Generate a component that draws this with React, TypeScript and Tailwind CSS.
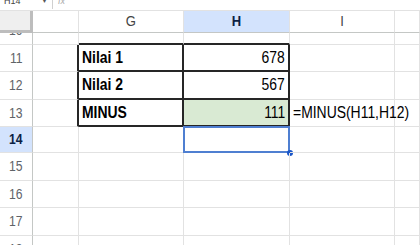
import React from "react";

const cols = [33, 46, 105, 106, 105, 25];

type CellProps = {
  w: number;
  className?: string;
  children?: React.ReactNode;
};

function Cell({ w, className = "", children }: CellProps) {
  return (
    <div
      className={`relative shrink-0 border-r border-b ${className}`}
      style={{ width: w }}
    >
      {children}
    </div>
  );
}

function RowHead({ n, active, h }: { n: number; active?: boolean; h: number }) {
  return (
    <div
      className={`flex shrink-0 items-center justify-center border-r border-b border-r-[#c4c7c5] border-b-[#e2e2e2] text-[14px] ${
        active ? "bg-[#d3e3fd] font-bold text-[#0b1f44]" : "bg-white text-[#5f6368]"
      }`}
      style={{ width: cols[0], height: h }}
    >
      <span className="inline-block scale-x-[0.87]">{n}</span>
    </div>
  );
}

const grid = "border-r-[#e2e2e2] border-b-[#e2e2e2]";

export default function App() {
  return (
    <div className="h-[245px] w-[420px] overflow-hidden bg-white font-['Liberation_Sans',Arial,sans-serif] text-[16px] text-black">
      {/* name box / formula bar strip */}
      <div className="relative flex h-[11px] items-center overflow-hidden border-b border-[#e2e2e2] text-[9px] text-[#444]">
        <span className="absolute -top-[5px] left-[4px]">H14</span>
        <span className="absolute -top-[4px] left-[41px] text-[7px] text-[#555]">▼</span>
        <span className="absolute -top-[2px] left-[52px] h-[11px] w-px bg-[#d0d0d0]" />
        <span className="absolute -top-[5px] left-[58px] italic text-[#aaa]">fx</span>
      </div>

      {/* column headers */}
      <div className="flex h-[22px]">
        <div className="shrink-0 border-r-[3px] border-b-[3px] border-[#bdbdbd] bg-[#efefef]" style={{ width: cols[0] }} />
        {["", "G", "H", "I", ""].map((c, i) => (
          <div
            key={i}
            className={`flex shrink-0 items-center justify-center border-r border-b border-r-[#e2e2e2] border-b-[#c4c7c5] text-[15px] ${
              c === "H" ? "bg-[#d3e3fd] font-bold text-[#0b1f44]" : "text-[#444]"
            }`}
            style={{ width: cols[i + 1] }}
          >
            <span className="inline-block scale-x-[0.87]">{c}</span>
          </div>
        ))}
      </div>

      {/* row 10 partially hidden */}
      <div className="flex h-[12px]">
        <div
          className="shrink-0 overflow-hidden border-r border-b border-r-[#c4c7c5] border-b-[#e2e2e2] text-[14px] text-[#5f6368]"
          style={{ width: cols[0] }}
        >
          <div className="-mt-[16px] flex h-[27px] items-center justify-center">
            <span className="inline-block scale-x-[0.87]">10</span>
          </div>
        </div>
        <Cell w={cols[1]} className={grid} />
        <Cell w={cols[2]} className="border-b-2 border-r-[#e2e2e2] border-b-[#262626]" />
        <Cell w={cols[3]} className="border-b-2 border-r-[#e2e2e2] border-b-[#262626]" />
        <Cell w={cols[4]} className={grid} />
        <Cell w={cols[5]} className={grid} />
      </div>

      {[
        { n: 11, h: 27, label: "Nilai 1", val: "678" },
        { n: 12, h: 28, label: "Nilai 2", val: "567" },
        { n: 13, h: 27, label: "MINUS", val: "111" },
      ].map((r) => (
        <div key={r.n} className="flex" style={{ height: r.h }}>
          <RowHead n={r.n} h={r.h} />
          <Cell w={cols[1]} className="border-r-2 border-r-[#262626] border-b-[#e2e2e2]" />
          <Cell w={cols[2]} className="flex items-center border-r-2 border-b-2 border-r-[#262626] border-b-[#262626] pl-[3px] font-bold">
            <span className="inline-block origin-left scale-x-[0.87] whitespace-nowrap">{r.label}</span>
          </Cell>
          <Cell
            w={cols[3]}
            className={`flex items-center justify-end border-r-2 border-b-2 border-r-[#262626] border-b-[#262626] pr-[3px] ${
              r.n === 13 ? "bg-[#d9ead3]" : ""
            }`}
          >
            <span className="inline-block origin-right scale-x-[0.87]">{r.val}</span>
          </Cell>
          <Cell w={cols[4]} className={`flex items-center overflow-visible pl-[3px] ${grid}`}>
            {r.n === 13 && (
              <span className="inline-block origin-left scale-x-[0.87] whitespace-nowrap">=MINUS(H11,H12)</span>
            )}
          </Cell>
          <Cell w={cols[5]} className={grid} />
        </div>
      ))}

      {[
        { n: 14, h: 26 },
        { n: 15, h: 28 },
        { n: 16, h: 27 },
        { n: 17, h: 28 },
        { n: 18, h: 27 },
      ].map((r) => (
        <div key={r.n} className="flex" style={{ height: r.h }}>
          <RowHead n={r.n} h={r.h} active={r.n === 14} />
          <Cell w={cols[1]} className={grid} />
          <Cell w={cols[2]} className={grid} />
          <Cell w={cols[3]} className={grid}>
            {r.n === 14 && (
              <>
                <div className="absolute -left-px -top-px bottom-[-1px] right-[-1px] border-2 border-[#4f7fd1]" />
                <div className="absolute -bottom-[4px] -right-[4px] h-[6px] w-[6px] rounded-full bg-[#1a56c8]" />
              </>
            )}
          </Cell>
          <Cell w={cols[4]} className={grid} />
          <Cell w={cols[5]} className={grid} />
        </div>
      ))}
    </div>
  );
}
